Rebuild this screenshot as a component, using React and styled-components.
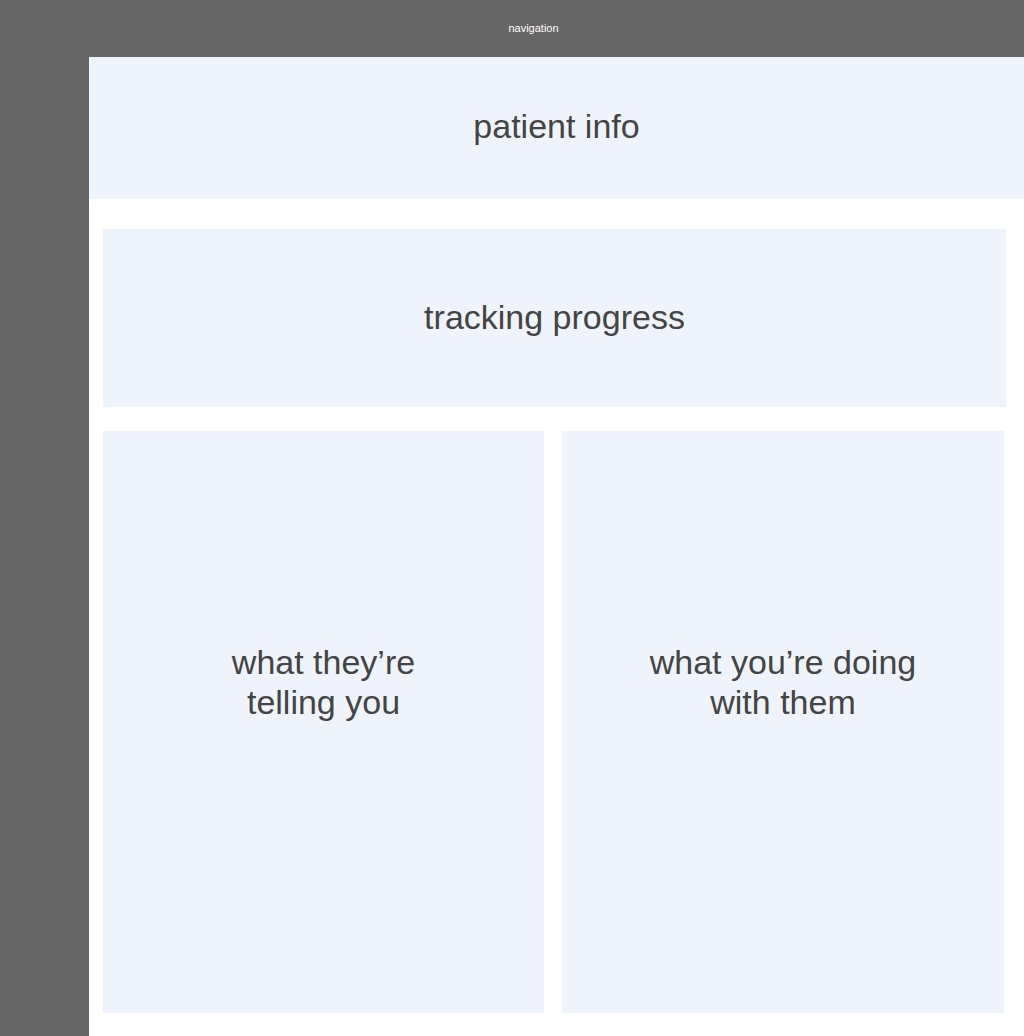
import styled, { createGlobalStyle } from 'styled-components'

const GlobalStyle = createGlobalStyle`
  html, body {
    margin: 0;
    padding: 0;
    background: #666666;
    font-family: "Liberation Sans", Arial, Helvetica, sans-serif;
  }
`

const App = () => {
  return <Layout>
    <GlobalStyle />
    <Nav>navigation</Nav>
    <Sidebar />
    <Main>
      <PatientInfo>patient info</PatientInfo>
      <Content>
        <Panel height="178px" lift="2px">tracking progress</Panel>
        <Columns>
          <Panel height="582px" lift="80px">what they’re<br />telling you</Panel>
          <Panel height="582px" lift="80px">what you’re doing<br />with them</Panel>
        </Columns>
      </Content>
    </Main>
  </Layout>
}

export default App

const Layout = styled.div`
  display: grid;
  grid-template-columns: 89px 1fr;
  grid-template-rows: 57px 1fr;
  min-height: 100vh;
  background: #666666;
`

const Nav = styled.header`
  grid-column: 1 / 3;
  display: flex;
  align-items: center;
  justify-content: center;
  color: #ffffff;
  font-size: 11px;
  padding-left: 43px;
  padding-bottom: 1px;
`

const Sidebar = styled.aside`
  background: #666666;
`

const Main = styled.main`
  background: #ffffff;
  display: flex;
  flex-direction: column;
`

const PatientInfo = styled.section`
  height: 142px;
  box-sizing: border-box;
  padding-bottom: 4px;
  background: #eff4fc;
  display: flex;
  align-items: center;
  justify-content: center;
  color: #444444;
  font-size: 34px;
`

const Content = styled.div`
  display: flex;
  flex-direction: column;
  gap: 24px;
  padding: 30px 18px 23px 14px;
`

const Columns = styled.div`
  display: grid;
  grid-template-columns: 441px 442px;
  gap: 18px;
`

const Panel = styled.section`
  height: ${p => p.height};
  box-sizing: border-box;
  padding-bottom: ${p => p.lift || '0px'};
  background: #eff4fc;
  display: flex;
  align-items: center;
  justify-content: center;
  text-align: center;
  color: #444444;
  font-size: 34px;
  line-height: 40px;
`
